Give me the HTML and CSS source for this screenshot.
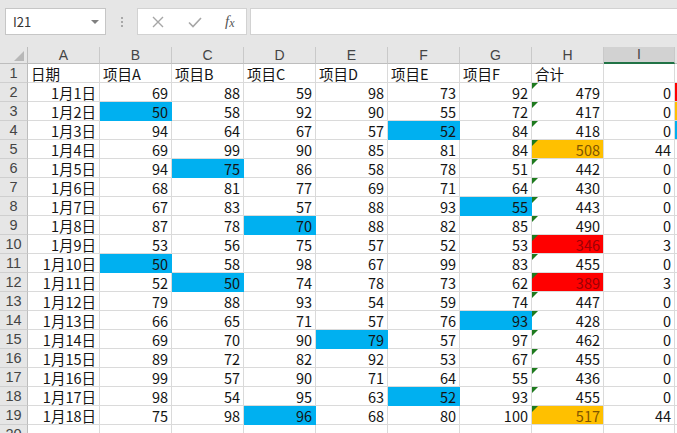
FILE: index.html
```html
<!DOCTYPE html>
<html lang="zh-CN">
<head>
<meta charset="utf-8">
<title>Sheet</title>
<link rel="stylesheet" href="styles.css">
</head>
<body>
<div class="app">
  <div class="fbar">
    <div class="namebox"><span class="ref">I21</span><span class="dd"></span></div>
    <div class="grip"><i></i><i></i><i></i></div>
    <div class="btns">
      <svg class="ico" width="14" height="14" viewBox="0 0 14 14"><path d="M2 2L12 12M12 2L2 12" stroke="#a6a6a6" stroke-width="1.4" fill="none"/></svg>
      <svg class="ico" width="16" height="14" viewBox="0 0 16 14"><path d="M2 7.5L6 11.5L14 3" stroke="#a6a6a6" stroke-width="1.6" fill="none"/></svg>
      <span class="fx">f<span class="x">x</span></span>
    </div>
    <div class="input"></div>
  </div>
  <div class="sheet">
    <div class="corner"><span class="sel"></span></div>
    <div class="ch">A</div><div class="ch">B</div><div class="ch">C</div><div class="ch">D</div><div class="ch">E</div><div class="ch">F</div><div class="ch">G</div><div class="ch">H</div><div class="ch on">I</div><div class="ch">J</div>

    <div class="rh">1</div><div class="c t">日期</div><div class="c t">项目A</div><div class="c t">项目B</div><div class="c t">项目C</div><div class="c t">项目D</div><div class="c t">项目E</div><div class="c t">项目F</div><div class="c t">合计</div><div class="c"></div><div class="c"></div>

    <div class="rh">2</div><div class="c">1月1日</div><div class="c">69</div><div class="c">88</div><div class="c">59</div><div class="c">98</div><div class="c">73</div><div class="c">92</div><div class="c tri">479</div><div class="c">0</div><div class="c rdj"></div>
    <div class="rh">3</div><div class="c">1月2日</div><div class="c bl">50</div><div class="c">58</div><div class="c">92</div><div class="c">90</div><div class="c">55</div><div class="c">72</div><div class="c tri">417</div><div class="c">0</div><div class="c gdj"></div>
    <div class="rh">4</div><div class="c">1月3日</div><div class="c">94</div><div class="c">64</div><div class="c">67</div><div class="c">57</div><div class="c bl">52</div><div class="c">84</div><div class="c tri">418</div><div class="c">0</div><div class="c blj"></div>
    <div class="rh">5</div><div class="c">1月4日</div><div class="c">69</div><div class="c">99</div><div class="c">90</div><div class="c">85</div><div class="c">81</div><div class="c">84</div><div class="c tri gd">508</div><div class="c">44</div><div class="c"></div>
    <div class="rh">6</div><div class="c">1月5日</div><div class="c">94</div><div class="c bl">75</div><div class="c">86</div><div class="c">58</div><div class="c">78</div><div class="c">51</div><div class="c tri">442</div><div class="c">0</div><div class="c"></div>
    <div class="rh">7</div><div class="c">1月6日</div><div class="c">68</div><div class="c">81</div><div class="c">77</div><div class="c">69</div><div class="c">71</div><div class="c">64</div><div class="c tri">430</div><div class="c">0</div><div class="c"></div>
    <div class="rh">8</div><div class="c">1月7日</div><div class="c">67</div><div class="c">83</div><div class="c">57</div><div class="c">88</div><div class="c">93</div><div class="c bl">55</div><div class="c tri">443</div><div class="c">0</div><div class="c"></div>
    <div class="rh">9</div><div class="c">1月8日</div><div class="c">87</div><div class="c">78</div><div class="c bl">70</div><div class="c">88</div><div class="c">82</div><div class="c">85</div><div class="c tri">490</div><div class="c">0</div><div class="c"></div>
    <div class="rh">10</div><div class="c">1月9日</div><div class="c">53</div><div class="c">56</div><div class="c">75</div><div class="c">57</div><div class="c">52</div><div class="c">53</div><div class="c tri rd">346</div><div class="c">3</div><div class="c"></div>
    <div class="rh">11</div><div class="c">1月10日</div><div class="c bl">50</div><div class="c">58</div><div class="c">98</div><div class="c">67</div><div class="c">99</div><div class="c">83</div><div class="c tri">455</div><div class="c">0</div><div class="c"></div>
    <div class="rh">12</div><div class="c">1月11日</div><div class="c">52</div><div class="c bl">50</div><div class="c">74</div><div class="c">78</div><div class="c">73</div><div class="c">62</div><div class="c tri rd">389</div><div class="c">3</div><div class="c"></div>
    <div class="rh">13</div><div class="c">1月12日</div><div class="c">79</div><div class="c">88</div><div class="c">93</div><div class="c">54</div><div class="c">59</div><div class="c">74</div><div class="c tri">447</div><div class="c">0</div><div class="c"></div>
    <div class="rh">14</div><div class="c">1月13日</div><div class="c">66</div><div class="c">65</div><div class="c">71</div><div class="c">57</div><div class="c">76</div><div class="c bl">93</div><div class="c tri">428</div><div class="c">0</div><div class="c"></div>
    <div class="rh">15</div><div class="c">1月14日</div><div class="c">69</div><div class="c">70</div><div class="c">90</div><div class="c bl">79</div><div class="c">57</div><div class="c">97</div><div class="c tri">462</div><div class="c">0</div><div class="c"></div>
    <div class="rh">16</div><div class="c">1月15日</div><div class="c">89</div><div class="c">72</div><div class="c">82</div><div class="c">92</div><div class="c">53</div><div class="c">67</div><div class="c tri">455</div><div class="c">0</div><div class="c"></div>
    <div class="rh">17</div><div class="c">1月16日</div><div class="c">99</div><div class="c">57</div><div class="c">90</div><div class="c">71</div><div class="c">64</div><div class="c">55</div><div class="c tri">436</div><div class="c">0</div><div class="c"></div>
    <div class="rh">18</div><div class="c">1月17日</div><div class="c">98</div><div class="c">54</div><div class="c">95</div><div class="c">63</div><div class="c bl">52</div><div class="c">93</div><div class="c tri">455</div><div class="c">0</div><div class="c"></div>
    <div class="rh">19</div><div class="c">1月18日</div><div class="c">75</div><div class="c">98</div><div class="c bl">96</div><div class="c">68</div><div class="c">80</div><div class="c">100</div><div class="c tri gd">517</div><div class="c">44</div><div class="c"></div>
    <div class="rh">20</div><div class="c"></div><div class="c"></div><div class="c"></div><div class="c"></div><div class="c"></div><div class="c"></div><div class="c"></div><div class="c"></div><div class="c"></div><div class="c"></div>
  </div>
</div>
</body>
</html>
```
FILE: styles.css
```css
html, body {
  margin: 0;
  padding: 0;
}
body {
  width: 677px;
  height: 433px;
  overflow: hidden;
  background: #e6e6e6;
  font-family: "Noto Sans CJK SC", "Noto Sans", sans-serif;
}
.app {
  display: flex;
  flex-direction: column;
  width: 677px;
  height: 433px;
  overflow: hidden;
}
.fbar {
  height: 47px;
  flex: none;
  display: flex;
  align-items: flex-start;
  padding: 8px 0 0 5px;
  box-sizing: border-box;
}
.namebox {
  width: 101px;
  height: 27px;
  box-sizing: border-box;
  background: #fff;
  border: 1px solid #c6c6c6;
  display: flex;
  align-items: center;
  justify-content: space-between;
  padding: 0 6px 0 7px;
}
.ref {
  font-size: 13px;
  color: #333;
}
.dd {
  width: 0;
  height: 0;
  border-left: 4px solid transparent;
  border-right: 4px solid transparent;
  border-top: 4px solid #808080;
}
.grip {
  width: 31px;
  height: 27px;
  display: flex;
  flex-direction: column;
  align-items: center;
  justify-content: center;
  gap: 2px;
}
.grip i {
  width: 2px;
  height: 2px;
  background: #a8a8a8;
  display: block;
}
.btns {
  width: 110px;
  height: 27px;
  box-sizing: border-box;
  background: #fff;
  border: 1px solid #d2d2d2;
  display: flex;
  align-items: center;
  padding-left: 13px;
  gap: 22px;
}
.fx {
  font-family: "Liberation Serif", serif;
  font-style: italic;
  font-size: 15px;
  color: #555;
  line-height: 1;
}
.fx .x {
  font-size: 12px;
  position: relative;
  top: 1px;
}
.input {
  margin-left: 3px;
  flex: 1;
  height: 27px;
  box-sizing: border-box;
  background: #fff;
  border: 1px solid #d2d2d2;
  border-right: none;
}
.sheet {
  flex: 1;
  display: grid;
  grid-template-columns: 28px repeat(8, 72px) 71px 40px;
  grid-template-rows: 17px;
  grid-auto-rows: 19px;
  background: #fff;
  overflow: hidden;
  font-size: 14.5px;
  color: #141414;
}
.corner {
  background: #e6e6e6;
  border-right: 1px solid #bdbdbd;
  border-bottom: 1px solid #bdbdbd;
  box-sizing: border-box;
  position: relative;
}
.sel {
  position: absolute;
  right: 3px;
  bottom: 2px;
  width: 0;
  height: 0;
  border-left: 10px solid transparent;
  border-bottom: 10px solid #b8b8b8;
}
.ch {
  background: #e6e6e6;
  border-right: 1px solid #c9c9c9;
  border-bottom: 1px solid #bdbdbd;
  box-sizing: border-box;
  text-align: center;
  color: #444;
  font-size: 14px;
  line-height: 16px;
  font-family: "Liberation Sans", sans-serif;
}
.ch.on {
  background: #d2d2d2;
  border-bottom: 2px solid #217346;
  line-height: 15px;
}
.rh {
  background: #e6e6e6;
  border-right: 1px solid #bdbdbd;
  border-bottom: 1px solid #cfcfcf;
  box-sizing: border-box;
  text-align: center;
  color: #444;
  font-size: 14.5px;
  line-height: 19px;
  font-family: "Liberation Sans", sans-serif;
}
.c {
  border-right: 1px solid #dadada;
  border-bottom: 1px solid #dadada;
  box-sizing: border-box;
  text-align: right;
  padding: 0 3px;
  line-height: 19px;
  white-space: nowrap;
  overflow: hidden;
  position: relative;
}
.c.t {
  text-align: left;
}
.bl {
  background: #00b0f0;
  border-color: #00b0f0;
}
.rd {
  background: #ff0000;
  color: #9c0006;
}
.gd {
  background: #ffc000;
  color: #7f5500;
}
.tri::before {
  content: "";
  position: absolute;
  top: 0;
  left: 0;
  width: 0;
  height: 0;
  border-top: 6px solid #1e7a1e;
  border-right: 6px solid transparent;
}
.rdj {
  background: linear-gradient(to right, #ff0000 0 3px, transparent 3px);
}
.gdj {
  background: linear-gradient(to right, #ffc000 0 3px, transparent 3px);
}
.blj {
  background: linear-gradient(to right, #00b0f0 0 3px, transparent 3px);
}
```
